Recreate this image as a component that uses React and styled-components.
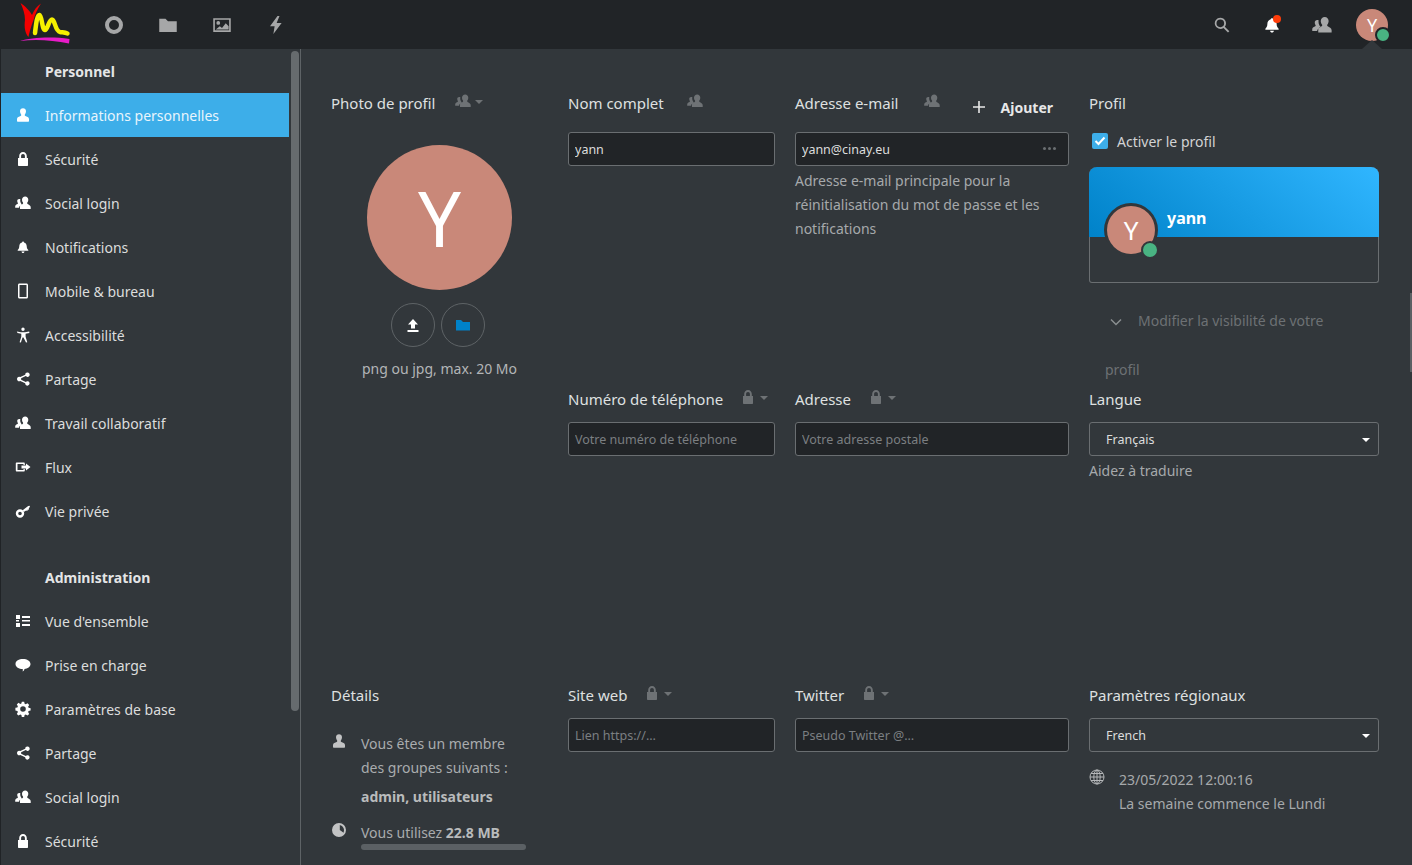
import React from 'react';
import styled, { createGlobalStyle } from 'styled-components';

const GlobalStyle = createGlobalStyle`
  html, body {
    margin: 0;
    height: 100%;
    overflow: hidden;
    background: #32373b;
  }
  body {
    font-family: "Noto Sans", "Open Sans", sans-serif;
    font-size: 15px;
    color: #d8d9da;
  }
  * { box-sizing: border-box; }
`;

const PATHS = {
  user: 'M8 1.200c-1.800 0-3 1.300-3 3 0 1.200.5 2.200 1 3 .4.700.3 1.400-.4 1.800-1.300.7-3.600 1.100-3.600 3V14c0 .4.3.7.7.7h10.600c.4 0 .7-.3.7-.7v-2c0-1.900-2.300-2.300-3.600-3-.7-.4-.8-1.100-.4-1.800.5-.8 1-1.800 1-3 0-1.700-1.200-3-3-3z',
  lock: 'M8 1C5.800 1 4.200 2.700 4.200 5v2H3v7.300c0 .4.3.7.7.7h8.600c.4 0 .7-.3.7-.7V7h-1.200V5C11.800 2.700 10.200 1 8 1zm0 2c1.200 0 1.900.9 1.900 2v2H6.100V5c0-1.100.7-2 1.900-2z',
  contacts: 'M10.200 1.500c-1.900 0-3.200 1.400-3.200 3.200 0 1.200.5 2.200 1 2.900.3.600.2 1.100-.3 1.400-1 .6-2.700 1-2.700 2.600v2.400h10.700v-1.900c0-1.800-2-2.400-3.100-3.100-.5-.3-.6-.8-.3-1.400.5-.7 1-1.700 1-2.900 0-1.800-1.300-3.200-3.100-3.200zM4.200 4C3 4 2.200 4.900 2.200 6.100c0 .8.300 1.400.6 1.900.2.400.2.800-.2 1C1.700 9.500.2 9.900.2 11.200v1.600h3.900c.1-1.400 1.100-2.100 2-2.700.3-.2.5-.4.700-.5-.2-.4-.5-.8-.8-1.300C5.500 7.500 5.200 6.500 5.200 5.400c0-.5.1-.9.200-1.100C5 4.100 4.600 4 4.200 4z',
  bell: 'M8 2.500c-.6 0-1 .4-1 .9C5.300 3.900 4.300 5.300 4.300 7c0 2-.7 3.200-1.600 3.900v.9h10.600v-.9c-.9-.7-1.600-1.900-1.600-3.900 0-1.700-1-3.100-2.700-3.600 0-.5-.4-.9-1-.9zM6.500 12.500c0 .8.700 1.500 1.500 1.500s1.500-.7 1.500-1.500z',
  phone: 'M4.500.5h7c.9 0 1.500.7 1.500 1.500v12c0 .8-.6 1.500-1.500 1.500h-7C3.600 15.500 3 14.800 3 14V2c0-.8.6-1.500 1.500-1.500zm0 1.500v12h7V2z',
  access: 'M8 .6a1.700 1.700 0 1 1 0 3.400 1.700 1.700 0 0 1 0-3.400zM1.800 4.600l4.200.6h4l4.200-.6.2 1.300-3.800.9v3l1.700 5.400-1.300.4L8.500 10.500h-1L5.900 15.600l-1.300-.4L6.300 9.800v-3L2.500 5.900z',
  share: 'M12.500 1.500a2.200 2.200 0 1 1-1.700 3.600L6.100 7.300a2.300 2.300 0 0 1 0 1.400l4.700 2.200a2.200 2.200 0 1 1-.6 1.300L5.300 9.900a2.200 2.200 0 1 1 0-3.800l4.900-2.300a2.200 2.200 0 0 1 2.300-2.300z',
  flux: 'M1.800 3.500h7c.6 0 1 .4 1 1V6H8.500V5H2.500v6h6v-1h1.300v1.500c0 .6-.4 1-1 1h-7c-.6 0-1-.4-1-1v-7c0-.6.400-1 1-1zM11 4.500l4.500 3.500L11 11.500V9.500H6.500v-3H11z',
  key: 'M5 6.300a4.200 4.200 0 1 1 0 8.400 4.200 4.200 0 0 1 0-8.400zm0 2.400a1.800 1.800 0 1 0 0 3.600 1.800 1.800 0 0 0 0-3.600zM7.700 7.200l5.500-4.200 1.400-.2.400 1.200-1.200 1 .3 1.500-1.500.2-.2 1.200-1.300-.4-2.300 1.600z',
  list: 'M1 2h4v4H1zm6 1h8v2H7zM1 10h4v4H1zm6 1h8v2H7zM7 7h8v1.600H7zM1 7h3v1.600H1z',
  comment: 'M8 2c4 0 7.500 2 7.500 5s-3 4.800-6 5c-.2 1-.7 2-1.900 2.600.3-.9.300-1.800.1-2.600C4 11.900.5 10.200.5 7S4 2 8 2z',
  gear: 'M6.800 .8h2.400l.4 2c.4.1.8.3 1.100.5l1.800-1.100 1.700 1.700-1.100 1.800c.2.300.4.700.5 1.100l2 .4v2.400l-2 .4c-.1.4-.3.8-.5 1.100l1.100 1.800-1.700 1.700-1.800-1.100c-.3.2-.7.4-1.100.5l-.4 2H6.800l-.4-2c-.4-.1-.8-.3-1.100-.5l-1.800 1.100-1.700-1.700 1.100-1.800c-.2-.3-.4-.7-.5-1.100l-2-.4V6.800l2-.4c.1-.4.3-.8.5-1.100L1.800 3.500l1.700-1.700 1.800 1.100c.3-.2.7-.4 1.100-.5zM8 5.200a2.800 2.800 0 1 0 0 5.600 2.800 2.800 0 0 0 0-5.600z',
  upload: 'M8 2l5 5.500H10v4H6v-4H3zM2.500 13h11v2h-11z',
  folder: 'M1 3h5l2 2h7v8.500H1z',
  image: 'M1 2.500h14v11H1zm1.300 1.300v8.400h11.400V3.800zM5 4.800a1.500 1.500 0 1 1 0 3 1.500 1.500 0 0 1 0-3zM3 11.500l3.200-2.500 1.800 1.300 3-3.800 2.300 2.500v2.500z',
  flash: 'M9.200 .8 3.200 9h3.700l-1 6.200L12.500 6.300H8.500l2.300-5.500z',
  search: 'M6.500 1.500a5 5 0 0 1 4 8l4 4-1.200 1.200-4-4a5 5 0 1 1-2.800-9.200zm0 1.600a3.400 3.400 0 1 0 0 6.800 3.400 3.400 0 0 0 0-6.800z',
  clock: 'M8 1a7 7 0 1 1 0 14A7 7 0 0 1 8 1zm.8 2v5l3.800 2.800A5.600 5.600 0 0 0 8.800 3z',
  plus: 'M7.200 2h1.600v5.200H14v1.600H8.800V14H7.200V8.800H2V7.200h5.200z',
};

const Icon = ({ name, size = 16 }) => (
  <svg width={size} height={size} viewBox="0 0 16 16" fill="currentColor" fillRule="evenodd" aria-hidden="true">
    <path d={PATHS[name]} />
  </svg>
);

const Logo = () => (
  <svg width="52" height="46" viewBox="19 0 52 46" aria-hidden="true">
    <path d="M35 33 C36 25 37 14.500 39.500 15 C42 15.500 42 30 45 30 C47.500 30 49 19.500 52 19.500 C55 19.500 55 31 60 32 C63 32.500 65 32.500 67.500 33.500" fill="none" stroke="#f5f000" strokeWidth="4.500" strokeLinecap="round" />
    <path d="M20.500 3 C25 6 30 11 32 15 C34 10 37 6 41 3.500 C38 8 35 14 33.500 20 C31 27 29 33 28.500 37 C25 33 24 27 25 20 C25 14 23 8 20.500 3z" fill="#f30000" />
    <path d="M20 41 C30 38 50 36 69.500 39 L69 43.500 C52 40 35 39 20 41z" fill="#e81bc8" />
  </svg>
);

const Page = styled.div`
  width: 1412px;
  height: 865px;
  overflow: hidden;
  display: flex;
  flex-direction: column;
  position: relative;
`;

const Header = styled.header`
  height: 49px;
  flex: none;
  display: flex;
  align-items: center;
  background: #212427;
`;

const LogoBox = styled.div`
  width: 87px;
  height: 49px;
  display: flex;
  padding-left: 19px;
`;

const AppLink = styled.div`
  width: 54px;
  display: flex;
  justify-content: center;
  color: #a6a7a8;
`;

const Ring = styled.div`
  width: 18px;
  height: 18px;
  border-radius: 50%;
  border: 4px solid #a6a7a8;
`;

const HeaderRight = styled.div`
  margin-left: auto;
  display: flex;
  align-items: center;
  padding-right: 24px;
`;

const HeaderAction = styled.div`
  width: 50px;
  height: 49px;
  display: flex;
  align-items: center;
  justify-content: center;
  position: relative;
  color: ${(p) => (p.$bright ? '#ffffff' : '#a6a7a8')};
`;

const BellDot = styled.span`
  position: absolute;
  top: 15px;
  left: 26px;
  width: 8px;
  height: 8px;
  border-radius: 50%;
  background: #ff3d0a;
`;

const HeaderAvatarWrap = styled.div`
  width: 32px;
  height: 49px;
  margin-left: 9px;
  position: relative;
  display: flex;
  align-items: center;
`;

const Avatar = styled.div`
  width: ${(p) => p.$size}px;
  height: ${(p) => p.$size}px;
  border-radius: 50%;
  background: #c98879;
  color: #fff;
  font-family: "Noto Sans", sans-serif;
  font-size: ${(p) => p.$font}px;
  line-height: ${(p) => p.$size}px;
  text-align: center;
  flex: none;
`;

const StatusDot = styled.span`
  position: absolute;
  width: ${(p) => p.$size}px;
  height: ${(p) => p.$size}px;
  right: ${(p) => p.$right}px;
  bottom: ${(p) => p.$bottom}px;
  border-radius: 50%;
  background: #49b382;
  border: 2px solid ${(p) => p.$ring};
`;

const Notch = styled.span`
  position: absolute;
  left: 6px;
  bottom: 0;
  width: 0;
  height: 0;
  border-left: 10px solid transparent;
  border-right: 10px solid transparent;
  border-bottom: 9px solid #32373b;
`;

const Body = styled.div`
  flex: 1;
  min-height: 0;
  display: flex;
`;

const Sidebar = styled.aside`
  width: 301px;
  flex: none;
  display: flex;
  border-left: 1px solid #202326;
  border-right: 1px solid #5e6366;
  overflow: hidden;
`;

const NavList = styled.nav`
  width: 288px;
  flex: none;
`;

const Caption = styled.div`
  height: 44px;
  margin-top: ${(p) => (p.$spaced ? 22 : 0)}px;
  padding-left: 44px;
  display: flex;
  align-items: center;
  font-weight: 700;
  font-size: 14px;
  color: #e4e5e6;
`;

const NavItem = styled.a`
  height: 44px;
  display: flex;
  align-items: center;
  gap: 14px;
  padding-left: 14px;
  background: ${(p) => (p.$active ? '#3daee9' : 'transparent')};
  color: ${(p) => (p.$active ? '#e9f5fc' : '#dcdddd')};
  font-size: 14px;
  svg {
    color: #fff;
    flex: none;
  }
`;

const ScrollTrack = styled.div`
  flex: 1;
  padding: 2px 0 0 2px;
`;

const ScrollThumb = styled.div`
  width: 8px;
  height: 660px;
  border-radius: 4px;
  background: #666b6e;
`;

const PageThumb = styled.div`
  position: absolute;
  top: 293px;
  right: 0;
  width: 2px;
  height: 79px;
  background: #5b6064;
`;

const Content = styled.main`
  flex: 1;
  padding: 39px 0 0 30px;
  display: grid;
  grid-template-columns: 217px 207px 274px 290px;
  grid-auto-rows: 296px;
  column-gap: 20px;
`;

const Section = styled.section`
  grid-row: ${(p) => p.$rows || 'auto'};
  min-width: 0;
`;

const LabelRow = styled.div`
  height: 30px;
  display: flex;
  align-items: center;
  margin-bottom: ${(p) => (p.$gap === undefined ? 8 : p.$gap)}px;
  font-size: 15px;
  color: #dfe0e0;
`;

const Scope = styled.span`
  display: flex;
  align-items: center;
  margin-left: ${(p) => p.$offset}px;
  margin-top: -4px;
  color: #6e7275;
`;

const Caret = styled.span`
  width: 0;
  height: 0;
  margin-left: 4px;
  margin-top: 1px;
  border-left: 4px solid transparent;
  border-right: 4px solid transparent;
  border-top: 4px solid ${(p) => p.$color || '#6e7275'};
`;

const AddButton = styled.div`
  margin: 8px 16px 0 auto;
  display: flex;
  align-items: center;
  gap: 14px;
  font-weight: 700;
  font-size: 14px;
  color: #e8e8e8;
`;

const Field = styled.div`
  position: relative;
  display: block;
`;

const TextInput = styled.input`
  width: 100%;
  height: 34px;
  padding: 0 6px;
  display: block;
  background: #212427;
  border: 1px solid #6a6e71;
  border-radius: 3px;
  color: #dcdddd;
  font-family: inherit;
  font-size: 12.5px;
  outline: none;
  &::placeholder {
    color: #7b7f82;
    opacity: 1;
  }
`;

const Dots = styled.span`
  position: absolute;
  right: 17px;
  top: 15px;
  width: 3px;
  height: 3px;
  border-radius: 50%;
  background: #6a6e71;
  box-shadow: 5px 0 #6a6e71, -5px 0 #6a6e71;
  margin-right: 1px;
`;

const Select = styled.div`
  height: 34px;
  padding: 0 8px 0 16px;
  display: flex;
  align-items: center;
  justify-content: space-between;
  border: 1px solid #6a6e71;
  border-radius: 3px;
  font-size: 12.5px;
  color: #dcdddd;
`;

const Help = styled.p`
  margin: 3px 0 0;
  font-size: 14px;
  line-height: 24px;
  color: #a6a9ab;
`;

const PhotoBlock = styled.div`
  margin-top: 27px;
  display: flex;
  flex-direction: column;
  align-items: center;
`;

const PhotoActions = styled.div`
  margin: 13px 3px 0 0;
  display: flex;
  gap: 6px;
`;

const RoundButton = styled.div`
  width: 44px;
  height: 44px;
  border-radius: 50%;
  border: 1px solid #5e6366;
  display: flex;
  align-items: center;
  justify-content: center;
  color: ${(p) => p.$color};
`;

const PhotoHint = styled.div`
  margin-top: 10px;
  font-size: 14px;
  line-height: 24px;
  color: #b3b5b7;
`;

const CheckRow = styled.div`
  display: flex;
  align-items: center;
  gap: 9px;
  height: 18px;
  padding-left: 3px;
  font-size: 14px;
  color: #d2d3d4;
`;

const CheckBox = styled.span`
  width: 16px;
  height: 16px;
  border-radius: 2px;
  background: #3daee9;
  display: flex;
  align-items: center;
  justify-content: center;
`;

const Card = styled.div`
  margin-top: 17px;
  height: 116px;
  border-radius: 8px 8px 3px 3px;
  border: 1px solid #6a6e71;
  border-top: none;
  position: relative;
`;

const CardBanner = styled.div`
  height: 70px;
  margin: 0 -1px;
  padding: 41px 0 0 78px;
  border-radius: 8px 8px 0 0;
  background: linear-gradient(40deg, #0082c9, #30b6ff);
  color: #fff;
  font-weight: 700;
  font-size: 16px;
  line-height: 20px;
`;

const CardAvatar = styled.div`
  position: absolute;
  left: 14px;
  top: 36px;
  padding: 3px;
  border-radius: 50%;
  background: #32373b;
`;

const VisibilityLink = styled.div`
  margin-top: 13px;
  padding-left: 16px;
  font-size: 14px;
  line-height: 49px;
  color: #6d7174;
`;

const Chevron = styled.svg`
  margin: 0 16px 0 5px;
  vertical-align: 0;
`;

const DetailRow = styled.div`
  display: flex;
  margin-top: ${(p) => p.$top}px;
  font-size: 14px;
  line-height: 24px;
  color: #a9acae;
  svg {
    flex: none;
    margin: 1px 14px 0 0;
    color: #c2c3c4;
  }
  strong {
    font-weight: 700;
    color: #b9bbbc;
  }
`;

const DetailIndent = styled.div`
  padding-left: 30px;
  font-size: 14px;
  line-height: 24px;
  margin-top: 5px;
  font-weight: 700;
  color: #b9bbbc;
`;

const UsageBar = styled.div`
  margin: -1px 0 0 30px;
  width: 165px;
  height: 6px;
  border-radius: 3px;
  background: #5b6064;
`;

const LocaleInfo = styled.div`
  margin-top: 16px;
  display: flex;
  font-size: 14px;
  line-height: 24px;
  color: #a6a9ab;
  svg {
    flex: none;
    margin: 1px 14px 0 0;
  }
`;

const Globe = () => (
  <svg width="16" height="16" viewBox="0 0 16 16" fill="none" stroke="#b5b7b9" strokeWidth="1">
    <circle cx="8" cy="8" r="7" />
    <ellipse cx="8" cy="8" rx="3.200" ry="7" />
    <path d="M8 1v14M1 8h14M2 4.500h12M2 11.500h12" />
  </svg>
);

const CheckMark = () => (
  <svg width="12" height="10" viewBox="0 0 12 10" fill="none" stroke="#fff" strokeWidth="2">
    <path d="M1.500 5l3 3 6-6.500" />
  </svg>
);

const personal = [
  ['user', 'Informations personnelles', true],
  ['lock', 'Sécurité'],
  ['contacts', 'Social login'],
  ['bell', 'Notifications'],
  ['phone', 'Mobile & bureau'],
  ['access', 'Accessibilité'],
  ['share', 'Partage'],
  ['contacts', 'Travail collaboratif'],
  ['flux', 'Flux'],
  ['key', 'Vie privée'],
];

const admin = [
  ['list', "Vue d'ensemble"],
  ['comment', 'Prise en charge'],
  ['gear', 'Paramètres de base'],
  ['share', 'Partage'],
  ['contacts', 'Social login'],
  ['lock', 'Sécurité'],
];

const renderNav = (items) =>
  items.map(([icon, label, active]) => (
    <NavItem key={label} $active={active}>
      <Icon name={icon} />
      {label}
    </NavItem>
  ));

const Label = ({ text, icon = 'lock', caret = true, offset = 17, gap, children }) => (
  <LabelRow $gap={gap}>
    {text}
    <Scope $offset={offset}>
      <Icon name={icon} />
      {caret && <Caret />}
    </Scope>
    {children}
  </LabelRow>
);

export default function App() {
  return (
    <Page>
      <GlobalStyle />
      <Header>
        <LogoBox>
          <Logo />
        </LogoBox>
        <AppLink><Ring /></AppLink>
        <AppLink><Icon name="folder" size={20} /></AppLink>
        <AppLink><Icon name="image" size={20} /></AppLink>
        <AppLink><Icon name="flash" size={20} /></AppLink>
        <HeaderRight>
          <HeaderAction><Icon name="search" size={18} /></HeaderAction>
          <HeaderAction $bright>
            <Icon name="bell" size={20} />
            <BellDot />
          </HeaderAction>
          <HeaderAction><Icon name="contacts" size={20} /></HeaderAction>
          <HeaderAvatarWrap>
            <Notch />
            <Avatar $size={32} $font={18}>Y</Avatar>
            <StatusDot $size={16} $right={-3} $bottom={6} $ring="#212427" />
          </HeaderAvatarWrap>
        </HeaderRight>
      </Header>
      <Body>
        <Sidebar>
          <NavList>
            <Caption>Personnel</Caption>
            {renderNav(personal)}
            <Caption $spaced>Administration</Caption>
            {renderNav(admin)}
          </NavList>
          <ScrollTrack>
            <ScrollThumb />
          </ScrollTrack>
        </Sidebar>
        <Content>
          <Section $rows="span 2">
            <Label text="Photo de profil" icon="contacts" gap={0} offset={19} />
            <PhotoBlock>
              <Avatar $size={145} $font={76}>Y</Avatar>
              <PhotoActions>
                <RoundButton $color="#ffffff"><Icon name="upload" /></RoundButton>
                <RoundButton $color="#0082c9"><Icon name="folder" /></RoundButton>
              </PhotoActions>
              <PhotoHint>png ou jpg, max. 20 Mo</PhotoHint>
            </PhotoBlock>
          </Section>
          <Section>
            <Label text="Nom complet" icon="contacts" caret={false} gap={14} offset={23} />
            <TextInput readOnly defaultValue="yann" />
          </Section>
          <Section>
            <Label text="Adresse e-mail" icon="contacts" caret={false} gap={14} offset={26}>
              <AddButton>
                <Icon name="plus" />
                Ajouter
              </AddButton>
            </Label>
            <Field>
              <TextInput readOnly defaultValue="yann@cinay.eu" />
              <Dots />
            </Field>
            <Help>
              Adresse e-mail principale pour la réinitialisation du mot de passe et les notifications
            </Help>
          </Section>
          <Section>
            <LabelRow $gap={14}>Profil</LabelRow>
            <CheckRow>
              <CheckBox><CheckMark /></CheckBox>
              Activer le profil
            </CheckRow>
            <Card>
              <CardBanner>yann</CardBanner>
              <CardAvatar>
                <Avatar $size={48} $font={26}>Y</Avatar>
                <StatusDot $size={18} $right={-1} $bottom={-2} $ring="#32373b" />
              </CardAvatar>
            </Card>
            <VisibilityLink>
              <Chevron width="12" height="8" viewBox="0 0 12 8" fill="none" stroke="#8a8e90" strokeWidth="1.500">
                <path d="M1 1.500l5 5 5-5" />
              </Chevron>
              Modifier la visibilité de votre
              <br />
              profil
            </VisibilityLink>
          </Section>

          <Section>
            <Label text="Numéro de téléphone" />
            <TextInput readOnly placeholder="Votre numéro de téléphone" />
          </Section>
          <Section>
            <Label text="Adresse" />
            <TextInput readOnly placeholder="Votre adresse postale" />
          </Section>
          <Section>
            <LabelRow>Langue</LabelRow>
            <Select>
              Français
              <Caret $color="#ffffff" />
            </Select>
            <Help>Aidez à traduire</Help>
          </Section>

          <Section>
            <LabelRow $gap={22}>Détails</LabelRow>
            <DetailRow $top={0}>
              <Icon name="user" />
              <div>
                Vous êtes un membre
                <br />
                des groupes suivants :
              </div>
            </DetailRow>
            <DetailIndent>admin, utilisateurs</DetailIndent>
            <DetailRow $top={12}>
              <Icon name="clock" />
              <div>
                Vous utilisez <strong>22.8 MB</strong>
              </div>
            </DetailRow>
            <UsageBar />
          </Section>
          <Section>
            <Label text="Site web" />
            <TextInput readOnly placeholder="Lien https://…" />
          </Section>
          <Section>
            <Label text="Twitter" />
            <TextInput readOnly placeholder="Pseudo Twitter @…" />
          </Section>
          <Section>
            <LabelRow>Paramètres régionaux</LabelRow>
            <Select>
              French
              <Caret $color="#ffffff" />
            </Select>
            <LocaleInfo>
              <Globe />
              <div>
                23/05/2022 12:00:16
                <br />
                La semaine commence le Lundi
              </div>
            </LocaleInfo>
          </Section>
        </Content>
      </Body>
      <PageThumb />
    </Page>
  );
}
